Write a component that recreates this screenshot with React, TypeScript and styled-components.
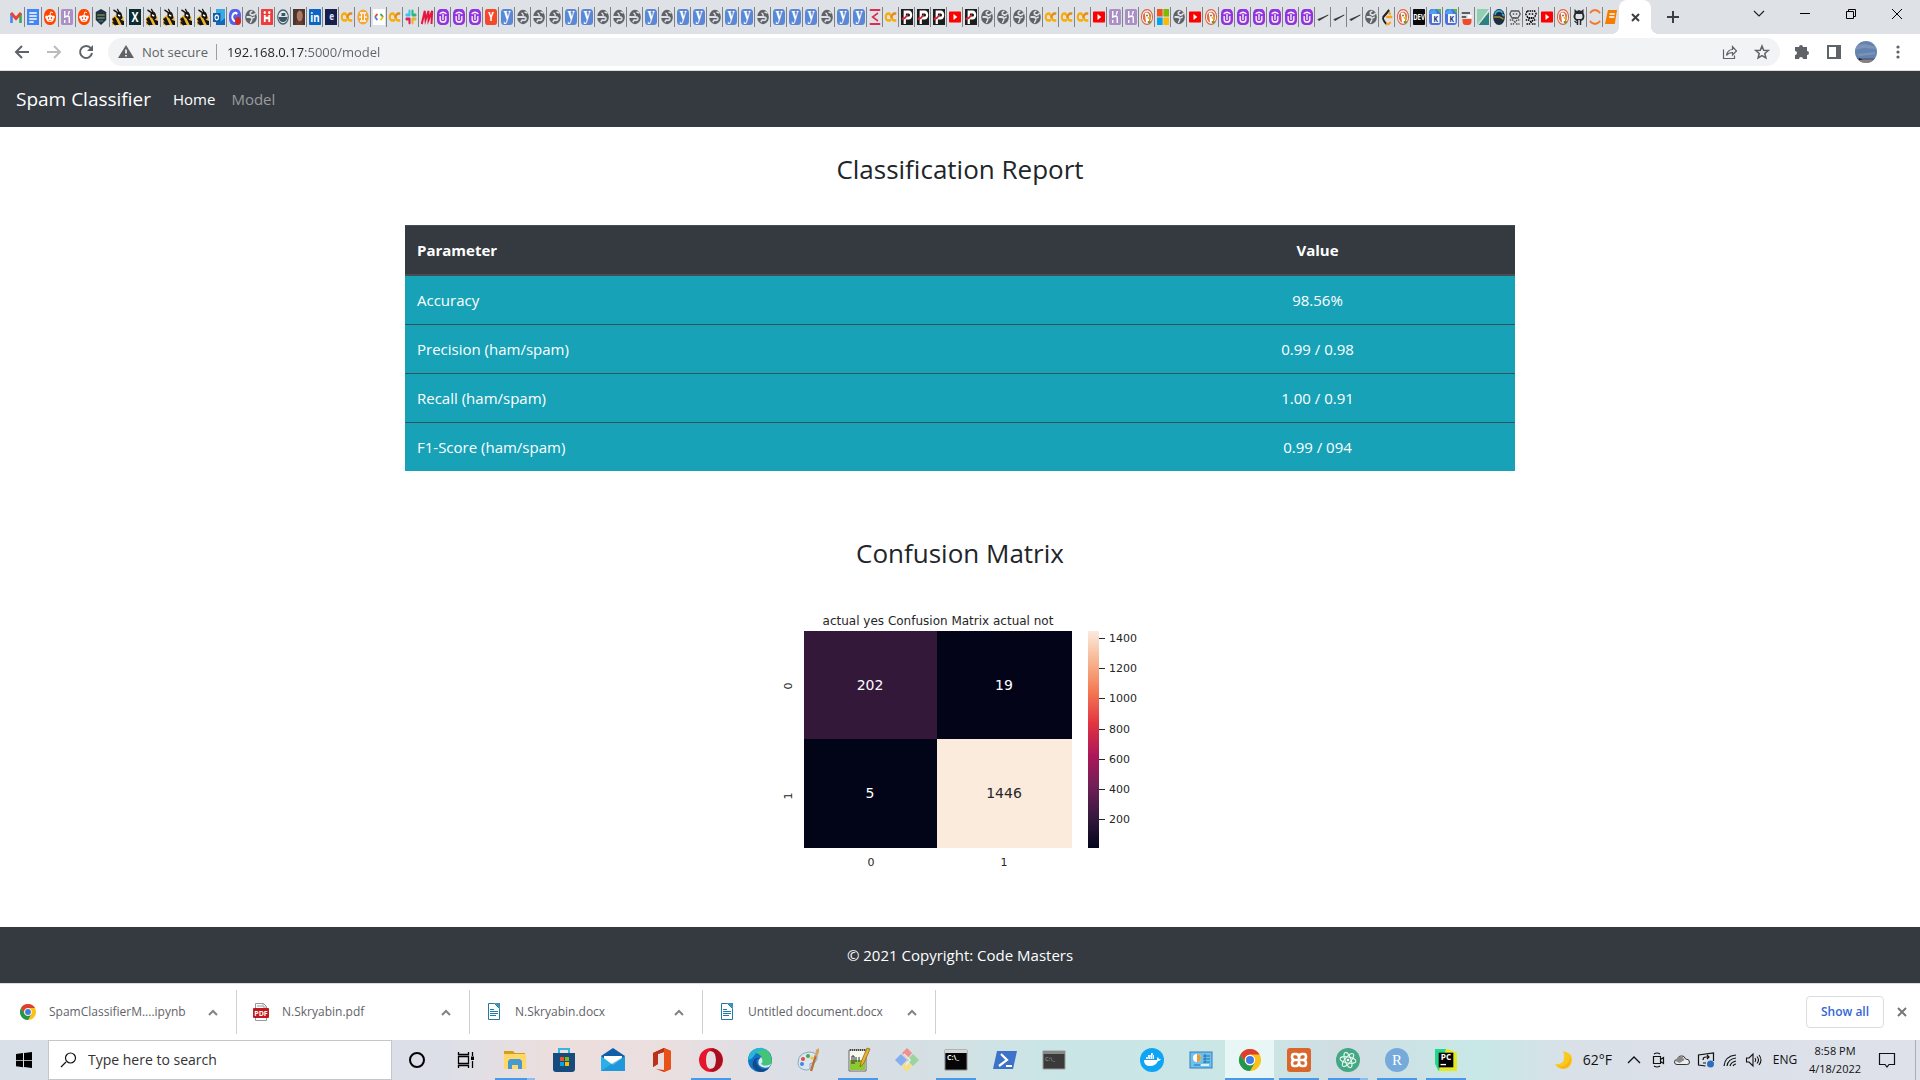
import React from 'react';
import styled, { createGlobalStyle } from 'styled-components';

const uiFont = '"Open Sans", "Noto Sans", sans-serif';

const GlobalStyle = createGlobalStyle`
  *, *::before, *::after { box-sizing: border-box; }
  body { margin: 0; background: #fff; color: #212529; font: 15px/24px ${uiFont}; }
  button, input { font: inherit; color: inherit; border: 0; padding: 0; margin: 0; background: none; }
  svg { display: block; flex: none; overflow: visible; }
`;

const Screen = styled.div`
  display: flex;
  flex-direction: column;
  min-height: 100vh;
`;

/* ---------- Tab strip ---------- */

const TabStrip = styled.div`
  display: flex;
  height: 34px;
  padding-left: 8px;
  background: #dee1e6;
`;

const Tabs = styled.div`
  display: flex;
  align-items: center;
`;

const Tab = styled.button<{ $wide: boolean; $last: boolean }>`
  display: flex;
  align-items: center;
  justify-content: center;
  width: ${(p) => (p.$wide ? 17 : 16)}px;
  height: 20px;
  border-right: 1px solid ${(p) => (p.$last ? 'transparent' : '#808387')};
`;

const ActiveTab = styled.div`
  position: relative;
  display: flex;
  align-items: center;
  justify-content: center;
  width: 32px;
  height: 34px;
  background: #fff;
  border-radius: 8px 8px 0 0;
  &::before, &::after {
    content: '';
    position: absolute;
    bottom: 0;
    width: 8px;
    height: 8px;
  }
  &::before { left: -8px; background: radial-gradient(circle at 0 0, transparent 8px, #fff 8px); }
  &::after { right: -8px; background: radial-gradient(circle at 100% 0, transparent 8px, #fff 8px); }
`;

const IconButton = styled.button<{ $w: number }>`
  display: flex;
  align-items: center;
  justify-content: center;
  width: ${(p) => p.$w}px;
  height: 28px;
`;

const NewTab = styled(IconButton)`
  height: 34px;
  margin-left: 8px;
`;

const WindowControls = styled.div`
  display: flex;
  margin-left: auto;
`;

/* ---------- Toolbar ---------- */

const Toolbar = styled.div`
  display: flex;
  align-items: center;
  height: 37px;
  padding: 0 6px;
  border-bottom: 1px solid #dadce0;
  color: #5f6368;
`;

const Omnibox = styled.div`
  display: flex;
  flex: 1;
  align-items: center;
  height: 28px;
  margin: 0 6px;
  padding: 0 2px 0 10px;
  border-radius: 14px;
  background: #f1f3f4;
  font-size: 13px;
`;

const Security = styled.span`
  display: flex;
  align-items: center;
  gap: 8px;
  padding-right: 8px;
  border-right: 1px solid #9aa0a6;
  line-height: 16px;
`;

const Address = styled.input`
  flex: 1;
  margin-left: 10px;
  outline: none;
  color: #5f6368;
  background: linear-gradient(90deg, #202124 77px, #5f6368 77px);
  -webkit-background-clip: text;
  background-clip: text;
  -webkit-text-fill-color: transparent;
`;

/* ---------- Web page ---------- */

const Site = styled.div`
  display: flex;
  flex: 1;
  flex-direction: column;
`;

const Navbar = styled.nav`
  display: flex;
  align-items: center;
  height: 56px;
  padding: 0 16px;
  background: #343a40;
`;

const Brand = styled.a`
  margin-right: 22px;
  color: #fff;
  font-size: 19px;
  text-decoration: none;
`;

const NavLink = styled.a<{ $muted?: boolean }>`
  margin-right: 16px;
  color: ${(p) => (p.$muted ? '#999c9f' : '#fff')};
  text-decoration: none;
`;

const Main = styled.main`
  display: flex;
  flex: 1;
  flex-direction: column;
  align-items: center;
  padding: 24px 15px;
`;

const Heading = styled.h2`
  margin: 0;
  font-size: 26px;
  font-weight: 400;
  line-height: 36px;
`;

const Report = styled.table`
  width: 100%;
  max-width: 1110px;
  margin: 38px 0 64px;
  border-collapse: collapse;
  background: #17a2b8;
  color: #fff;
`;

const HeadCell = styled.th`
  padding: 12px;
  border-top: 1px solid #454d55;
  border-bottom: 2px solid #454d55;
  background: #343a40;
  text-align: left;
  &:last-child { width: 395px; text-align: center; }
`;

const Cell = styled.td`
  padding: 12px;
  border-top: 1px solid #32545c;
  &:last-child { text-align: center; }
`;

const Chart = styled.svg`
  margin-top: 17px;
  font-family: "DejaVu Sans", sans-serif;
  fill: #262626;
`;

const Footer = styled.footer`
  padding: 16px;
  background: #343a40;
  color: #fff;
  text-align: center;
`;

/* ---------- Downloads shelf ---------- */

const Shelf = styled.div`
  display: flex;
  align-items: center;
  height: 57px;
  padding-left: 4px;
  border-top: 1px solid #dadce0;
  background: #fff;
`;

const Download = styled.button`
  display: flex;
  align-items: center;
  width: 233px;
  height: 44px;
  padding: 0 18px 0 16px;
  border-right: 1px solid #cfd1d4;
  color: #5f6368;
  font-size: 12px;
  & > span { flex: 1; margin-left: 13px; text-align: left; }
`;

const ShowAll = styled.button`
  width: 78px;
  height: 32px;
  margin-left: auto;
  border: 1px solid #dadce0;
  border-radius: 4px;
  color: #3367d6;
  font-size: 12px;
  font-weight: 600;
`;

/* ---------- Taskbar ---------- */

const Taskbar = styled.div`
  display: flex;
  height: 40px;
  background: linear-gradient(90deg, #d9e0e8 0, #dcdfe8 23%, #ecdedd 29%, #ebdfdf 34%, #dcdfe6 41%, #d5dfe3 48%, #c9e5e6 55%, #cae6e5 65%, #d0dde2 70%, #c8e8e8 77%, #dae0e8 82%, #dee1ea 100%);
  color: #111;
`;

const StartButton = styled(IconButton)`
  height: 40px;
`;

const SearchBox = styled.label`
  display: flex;
  align-items: center;
  width: 344px;
  padding: 0 11px;
  border: 1px solid #c3c6ca;
  background: #fff;
`;

const SearchInput = styled.input`
  flex: 1;
  margin-left: 12px;
  outline: none;
  font-size: 14px;
  &::placeholder { color: #333; opacity: 1; }
`;

const AppButton = styled.button<{ $open?: boolean; $stacked?: boolean; $active?: boolean }>`
  display: flex;
  align-items: center;
  justify-content: center;
  width: 49px;
  height: 40px;
  background:
    linear-gradient(90deg, ${(p) => (p.$stacked ? '#4a98e8 32px, #8dbdee 32px' : '#4a98e8, #4a98e8')})
      center bottom / ${(p) => (p.$active ? 49 : p.$open ? 40 : 0)}px 2px no-repeat,
    ${(p) => (p.$active ? '#e9f6f6' : 'transparent')};
`;

const Gap = styled.span`
  width: 49px;
`;

const Tray = styled.div`
  display: flex;
  align-items: center;
  margin-left: auto;
  padding-right: 4px;
`;

const TrayButton = styled(IconButton)`
  height: 40px;
`;

const Weather = styled.button`
  display: flex;
  align-items: center;
  gap: 10px;
  margin-right: 10px;
  font-size: 14px;
`;

const Language = styled.button`
  width: 38px;
  font-size: 12px;
`;

const Clock = styled.time`
  width: 62px;
  font-size: 11px;
  line-height: 18px;
  text-align: center;
`;

const ActionCenter = styled(TrayButton)`
  margin: 0 12px 0 5px;
`;

const DesktopEdge = styled.span`
  height: 40px;
  border-left: 1px solid #a9adb5;
`;

/* ---------- Favicons ---------- */

const glyph = (text: string, fill: string, size = 13, x = 8, y = 13, family = 'Open Sans') => (
  <text x={x} y={y} fill={fill} fontSize={size} fontWeight="700" fontFamily={family} textAnchor="middle">{text}</text>
);

const tile = (fill: string, r = 2) => <rect width="16" height="16" rx={r} fill={fill} />;

const favicons: Record<string, React.ReactNode> = {
  gmail: <g fill="none" strokeWidth="3.4"><path d="M2 14V4" stroke="#4285f4" /><path d="M14 14V4" stroke="#34a853" /><path d="M1.500 4L8 9.500 14.500 4" stroke="#ea4335" /></g>,
  docs: <>{tile('#4285f4', 0)}<path d="M3 4h10M3 7h10M3 10h10M3 13h6" stroke="#fff" strokeWidth="1.400" /></>,
  reddit: <>{tile('#ff4500', 7)}<ellipse cx="8" cy="9.500" rx="5" ry="3.600" fill="#fff" /><circle cx="3" cy="8" r="1.500" fill="#fff" /><circle cx="13" cy="8" r="1.500" fill="#fff" /><path d="M8 6l1-3 3 .7" stroke="#fff" fill="none" /><circle cx="6" cy="9" r="1" fill="#ff4500" /><circle cx="10" cy="9" r="1" fill="#ff4500" /><path d="M6 11.300q2 1 4 0" stroke="#ff4500" fill="none" strokeWidth=".8" /></>,
  heroku: <>{tile('#a98fc4')}<path d="M5 2v6q6-2 6 1v5M11 2q0 2-1.500 3.500M5 11v3" stroke="#fff" strokeWidth="1.800" fill="none" /></>,
  shield: <><path d="M8 0l7 3v8l-7 5-7-5V3z" fill="#1d3445" /><path d="M3 6h10M3 9h10" stroke="#7c8148" strokeWidth="1.500" /><path d="M5 12h6" stroke="#4f90b5" /></>,
  bee: <><path d="M0 9l8-5 7 4 1 8H0z" fill="#efb62f" /><path d="M6 4q5-3 7 1l1 4-3 2-5-3zM0 10l4-2 5 8H5zM9 10l7 2v4h-3z" fill="#151515" /><path d="M2 1l6 3M7 0l3 4M1 13l4 3" stroke="#151515" strokeWidth="1.600" fill="none" /><path d="M8 6l3 1" stroke="#fff" strokeWidth="1.400" /></>,
  x: <>{tile('#0b2c32', 0)}{glyph('X', '#fff', 14)}</>,
  outlook: <><rect x="4" width="12" height="15" fill="#39a8e8" /><path d="M4 9l6 4 6-4v7H4z" fill="#1466b8" /><rect y="4" width="10" height="9" fill="#0f5ba8" /><circle cx="5" cy="8.500" r="2.300" fill="none" stroke="#fff" strokeWidth="1.400" /></>,
  cc: <>{tile('#5562e8', 6)}<path d="M11 5a4 4 0 1 0 0 6" stroke="#fff" strokeWidth="2.400" fill="none" /><circle cx="12" cy="12" r="4" fill="#d32626" /></>,
  globe: <><ellipse cx="8" cy="8" rx="7.800" ry="7.200" fill="#5f6368" /><path d="M10 2q-4 1-3 3l3 1q3 0 4-2M2 8h4q4 0 3 3l-2 3M13 8l-3 1" stroke="#dee1e6" strokeWidth="1.800" fill="none" /></>,
  globeL: <><ellipse cx="8" cy="8" rx="7.800" ry="7.200" fill="#5f6368" /><path d="M0 8h8q1-3-2-4M8 8q5 0 4 2t-5 1l-2 2M10 3l4 1" stroke="#dee1e6" strokeWidth="1.800" fill="none" /></>,
  h: <>{tile('#f03c3c', 1)}<path d="M5 6v7M11 6v7M5 9h6" stroke="#fff" strokeWidth="2.400" /><circle cx="5" cy="3.500" r="1.500" fill="#fff" /><circle cx="11" cy="3.500" r="1.500" fill="#fff" /></>,
  whale: <><circle cx="8" cy="8" r="7" fill="#dfe6ea" stroke="#47606e" strokeWidth="1.500" /><path d="M2 8h12q-1 5-6 5T2 8zM6 4h5v3H6z" fill="#3d5564" /></>,
  photo: <>{tile('#4a3630', 0)}<ellipse cx="9" cy="7" rx="4" ry="5.500" fill="#b07a62" /><path d="M4 11q5 5 9-1v6H4z" fill="#6b3a2c" /></>,
  linkedin: <>{tile('#0a66c2', 1)}{glyph('in', '#fff', 13)}</>,
  e: <>{tile('#17204d', 0)}{glyph('e', '#d9def5', 11, 9, 11)}</>,
  colab: <g fill="none" strokeWidth="2.600"><path d="M8 10.500Q7 11.500 5 11.500q-4 0-4-3.500t4-3.500q2 0 3.500 3.500t4 3.500H15" stroke="#f9ab00" /><path d="M15 4.500h-2.500Q10 4.500 8 9" stroke="#e8871a" /></g>,
  orange: <><circle cx="8" cy="8" r="7.600" fill="#f4a63a" /><path d="M4 4h8M4 12h8M6 5v6M10 5v6M3 8h2M11 8h2" stroke="#fff" strokeWidth="1.300" /></>,
  dev: <>{tile('#fff', 0)}<g fill="none" strokeWidth="2.300"><path d="M6 5L2.500 8" stroke="#ea4335" /><path d="M2.500 8L6 11" stroke="#4285f4" /><path d="M10 5l3.500 3" stroke="#34a853" /><path d="M13.500 8L10 11" stroke="#fbbc04" /></g></>,
  slack: <g fill="none" strokeWidth="2.800" strokeLinecap="round"><path d="M6 2v4M2 6h4" stroke="#36c5f0" /><path d="M10 2v4M14 6h-3" stroke="#2eb67d" /><path d="M10 14v-4M14 10h-4" stroke="#ecb22e" /><path d="M6 14v-4M2 10h3" stroke="#e01e5a" /></g>,
  m: <path d="M1 15L5 2l1 9 4-9v9l5-9-1 13" fill="none" stroke="#e6173f" strokeWidth="2.600" />,
  u: <>{tile('#9333dc', 5)}<path d="M4.200 7v3.500q0 2.500 3.800 2.500t3.800-2.500V7M8 5v6" stroke="#fff" strokeWidth="1.700" fill="none" /><path d="M3.500 5Q8 1.500 12.500 5" stroke="#fff" strokeWidth="1.500" fill="none" /></>,
  yc: <>{tile('#f2492c', 3)}{glyph('Y', '#fff', 12, 8, 12)}</>,
  y: <>{tile('#5a87d6', 4)}{glyph('y', '#fff', 19, 8, 11, 'Liberation Serif')}</>,
  tally: <path d="M1 1h14M1 15h14M12 4L5 8l7 4" stroke="#e02b50" strokeWidth="2" fill="none" />,
  p: <>{tile('#1c1c1c', 0)}<path d="M5 15V3h5.500a3 3 0 0 1 0 6H5" stroke="#fff" strokeWidth="3" fill="none" /><path d="M1 10l4-1 4-3" stroke="#e02030" strokeWidth="2" fill="none" /></>,
  yt: <><rect y="2.500" width="16" height="11" rx="1" fill="#f00" /><path d="M6 5l5 3-5 3z" fill="#fff" /></>,
  duck: <><ellipse cx="8" cy="8" rx="7.400" ry="7.400" fill="#fff" stroke="#d9603c" strokeWidth="1.300" /><circle cx="8" cy="8" r="5.600" fill="#dd7048" /><path d="M5 4q5-2 6 3v3l-1 4H7z" fill="#fff" /><circle cx="8" cy="6.500" r=".9" fill="#333" /><path d="M9 8h4v2H9z" fill="#f5b21b" /><path d="M9 12h4v2H9z" fill="#57a83a" /></>,
  ms: <><path d="M0 0h7.500v7.500H0z" fill="#f25022" /><path d="M8.500 0H16v7.500H8.500z" fill="#7fba00" /><path d="M0 8.500h7.500V16H0z" fill="#00a4ef" /><path d="M8.500 8.500H16V16H8.500z" fill="#ffb900" /></>,
  dash: <path d="M1 10.500L15 6l-12 5.500z" stroke="#333" strokeWidth=".8" fill="#333" />,
  leet: <g fill="none" strokeWidth="2.400"><path d="M11 1L3 8q-1 2 1 4l3 3" stroke="#222" /><path d="M7 15q3 1 6-2M7 8h8M13 5l-3-1" stroke="#ffa116" /></g>,
  devto: <>{tile('#0a0a0a', 1)}{glyph('DEV', '#fff', 8, 8, 11)}</>,
  k: <>{tile('#4c6fdd', 4)}<path d="M0 5q2-5 8-5l3 5z" fill="#4aa3f0" /><path d="M10 0h6v5z" fill="#54b848" /><rect x="4" y="5" width="10" height="9" fill="#f3f6ff" />{glyph('K', '#23306e', 9, 9, 13)}</>,
  news: <><path d="M1 4h11M1 8h6" stroke="#333" strokeWidth="1.600" /><path d="M2 10h12v2q0 4-4 4H6q-4 0-4-4z" fill="#f04c2c" /><rect x="9" y="6" width="5" height="3" fill="#fff" /></>,
  tri: <><path d="M0 0h16L0 16z" fill="#90cfb0" /><path d="M16 3v13H2z" fill="#2b8280" /></>,
  py: <><ellipse cx="8" cy="8" rx="7.800" ry="8" fill="#1b2f3c" /><path d="M3 6q0-4 5-4 4 0 4 2" stroke="#3ba7dc" strokeWidth="2" fill="none" /><path d="M1 8h8l5 2" stroke="#a78f34" strokeWidth="1.500" fill="none" /><path d="M12 5l3 2" stroke="#3ba7dc" strokeWidth="2" /></>,
  bones: <g fill="none" stroke="#555" strokeWidth="1.500"><path d="M3 2h10l2 3-3 4H4L1 5z" /><path d="M5 5h2M9 5h2M5 9h6M1 11h4l3 2 3-2h4M2 15h4l2-2 2 2h4" strokeDasharray="2 1" /></g>,
  bonesDark: <g fill="none" stroke="#000" strokeWidth="1.700"><path d="M3 2h10l2 3-3 4H4L1 5z" strokeDasharray="2 1" /><path d="M5 5h2M9 5h2M5 9h6M1 11h4l3 2 3-2h4M2 15h4l2-2 2 2h4" strokeDasharray="2 1" /></g>,
  github: <><path d="M8 1L5 2 2 0v4Q0 7 1 9q2 3 4 3v4h6v-4q5-1 4-6l-1-2V0l-3 2z" fill="#24292e" /><path d="M4 5h8q2 4-1 5H5Q2 9 4 5zM7 11h2v5H7z" fill="#dee1e6" /><path d="M2 12l3 2" stroke="#24292e" strokeWidth="1.500" /></>,
  jupyter: <path d="M1 4Q8-2 15 4M1 12q7 6 14 0" stroke="#f37726" strokeWidth="2" fill="none" />,
  book: <><path d="M4 1h12l-3 14H0z" fill="#f57c00" /><path d="M6 5h7M5.500 8h7" stroke="#fff" strokeWidth="1.400" /></>,
};

const tabIcons = (
  'gmail docs reddit heroku reddit shield bee x bee bee bee bee outlook cc globe h whale photo linkedin e colab orange dev colab slack m u u u ' +
  'yc y globeL globeL globeL y y globeL globeL globeL y globeL y y globeL y y globeL y y y globeL y y tally colab p p p yt ' +
  'p globe globe globe globe colab colab colab yt heroku heroku duck ms globe yt duck u u u u u u dash dash dash globe leet duck devto k ' +
  'k news tri py bones bonesDark yt duck github jupyter book'
).split(' ');

const Favicon = ({ name }: { name: string }) => (
  <svg width="12" height="16" viewBox="0 0 16 16" preserveAspectRatio="none" aria-hidden="true">{favicons[name]}</svg>
);

/* ---------- Shared icons ---------- */

const Line = ({ d, w = 16, h = 16, s = 1, c = 'currentColor' }: { d: string; w?: number; h?: number; s?: number; c?: string }) => (
  <svg width={w} height={h} viewBox={`0 0 ${w} ${h}`} fill="none" stroke={c} strokeWidth={s} aria-hidden="true"><path d={d} /></svg>
);

const Chrome = ({ size }: { size: number }) => (
  <svg width={size} height={size} viewBox="0 0 24 24" aria-hidden="true">
    <circle cx="12" cy="12" r="12" fill="#fbc116" />
    <path d="M1.600 6A12 12 0 0 1 22.400 6H12a6 6 0 0 0-5.200 9z" fill="#dc3f31" />
    <path d="M1.600 6A12 12 0 0 0 12 24l5.200-9A6 6 0 0 1 6.800 15z" fill="#219653" />
    <circle cx="12" cy="12" r="5.600" fill="#fff" />
    <circle cx="12" cy="12" r="4.400" fill="#3e7bea" />
  </svg>
);

const Pdf = () => (
  <svg width="16" height="18" viewBox="0 0 16 18" aria-hidden="true">
    <path d="M2.500.5h8l3 3v14h-11z" fill="#fff" stroke="#999" />
    <path d="M4 3h5M10 .5V4h3" stroke="#999" fill="none" />
    <rect y="5" width="16" height="10" rx="1" fill="#c11920" />
    <text x="8" y="13" fontSize="7" fontWeight="700" textAnchor="middle" fill="#fff">PDF</text>
  </svg>
);

const Docx = () => (
  <svg width="16" height="18" viewBox="0 0 16 18" aria-hidden="true">
    <path d="M2.500.5h6l5 5v11h-11z" fill="#fff" stroke="#1f7aa5" />
    <path d="M8.500 0H14v5.500z" fill="#3791c0" />
    <path d="M4 6.500h4M4 8.500h8M4 10.500h8M4 12.500h6" stroke="#1f7aa5" />
  </svg>
);

const Icon = ({ size = 24, children }: { size?: number; children: React.ReactNode }) => (
  <svg width={size} height={size} viewBox="0 0 24 24" aria-hidden="true">{children}</svg>
);

type AppEntry = { name: string; open?: boolean; stacked?: boolean; active?: boolean; icon: React.ReactNode };

const pinned: AppEntry[] = [
  { name: 'Cortana', icon: <Icon><circle cx="12" cy="12" r="7" fill="none" stroke="#000" strokeWidth="2" /></Icon> },
  { name: 'Task View', icon: <Icon><path d="M4.500 8.500h10v7h-10zM4.500 4v2.500h10V4M4.500 20v-2.500h10V20M18.500 4v4M18.500 13v7" fill="none" stroke="#000" strokeWidth="1.300" /><rect x="17" y="8.500" width="3" height="3.500" /></Icon> },
  { name: 'File Explorer', open: true, stacked: true, icon: <Icon><path d="M1 3h9l2 2h10v5H1z" fill="#d69d1d" /><path d="M1 6h22v15H1z" fill="#ffd866" /><path d="M5 21v-8l2-2h10l2 2v8h-4v-4H9v4z" fill="#4699d3" /></Icon> },
  { name: 'Microsoft Store', icon: <Icon><path d="M7 6V1h10v5" fill="none" stroke="#37b5e5" strokeWidth="2" /><path d="M1 5h22v16q0 3-3 3H4q-3 0-3-3z" fill="#174b7d" /><path d="M8 9h4v4H8z" fill="#f25022" /><path d="M13 9h4v4h-4z" fill="#7fba00" /><path d="M8 14h4v4H8z" fill="#00a4ef" /><path d="M13 14h4v4h-4z" fill="#ffb900" /></Icon> },
  { name: 'Mail', icon: <Icon><path d="M0 8l12-8 12 8-3 8H3z" fill="#0f5fa8" /><path d="M3 8h18v8H3z" fill="#fff" /><path d="M0 8l12 9 12-9v15H0z" fill="#2caee8" /><path d="M0 23l12-8 12-7v15z" fill="#1887d2" opacity=".6" /></Icon> },
  { name: 'Office', icon: <Icon><path d="M14 0l7 3v18l-7 3-8-3 8 1V4L8 6v10l-5 3V5z" fill="#d83b12" /><path d="M14 0L3 5v14l5-3V6l6-2z" fill="#b9321b" /><path d="M14 0l7 3v18l-7 3z" fill="#e85219" /></Icon> },
  { name: 'Opera', open: true, icon: <Icon><path d="M12 0a12 12 0 1 0 0 24 12 12 0 0 0 0-24zm0 3q5 0 5 9t-5 9-5-9 5-9z" fill="#e5162b" fillRule="evenodd" /><path d="M14 .3a12 12 0 0 1 0 23.400Q11 23 11 21q6 0 6-9t-6-9q1-2 3-2.700z" fill="#a70f1e" /></Icon> },
  { name: 'Edge', icon: <Icon><circle cx="12" cy="12" r="12" fill="#1373c6" /><path d="M1 8Q6 2 12 7q4 4 1 8 0 4 10 2 2-6-1-11Q17-2 9 .400 2 2 1 8z" fill="#46c475" /><path d="M1 8Q4 0 12 0q5 0 8 3-10-3-14 5-2 3-6 4z" fill="#27b6d6" /><path d="M9 11q-2 4 2 8t10 1q-5 6-12 3-7-5-3-11 2-3 6-2z" fill="#114a8b" /><path d="M13 9q3 4 0 7 4 3 10 0l-2 3q-6 2-10-2-2-4 2-8z" fill="#dcecf2" /></Icon> },
  { name: 'Paint', icon: <Icon><path d="M1 15q0-10 11-11 9 0 8 7-1 4-5 4-3 0-2 3 1 4-4 4-8-1-8-7z" fill="#d9e6ef" stroke="#8aa8be" /><circle cx="6" cy="11" r="2" fill="#e44" /><circle cx="11" cy="8" r="2" fill="#4a4" /><circle cx="5" cy="16" r="2" fill="#48d" /><circle cx="15" cy="10" r="1.600" fill="#fb3" /><path d="M14 23l5-16" stroke="#b9732e" strokeWidth="2.400" /><path d="M18 8l1-6 3-2v4l-2 5z" fill="#d5a25c" /></Icon> },
  { name: 'Notepad++', open: true, icon: <Icon><path d="M3 2h17v21H3z" fill="#f7f9ee" stroke="#666" /><path d="M4 12h15v10H4z" fill="#8cc932" /><path d="M4 2h15" stroke="#444" strokeWidth="2" strokeDasharray="1 1" /><path d="M6 16V8h2v8M10 9v5M13 9v5" stroke="#333" fill="none" /><path d="M14 19l1-5 6-14 3 1-6 14z" fill="#e8b32b" stroke="#835d19" strokeWidth=".7" /></Icon> },
  { name: 'Git', icon: <Icon><path d="M12 0l5 5-5 6-5-6z" fill="#f0908c" /><path d="M6 6l6 6-6 6-6-6z" fill="#84adf2" /><path d="M18 6l6 6-6 6-6-6z" fill="#9bd49c" /><path d="M12 13l5 5-5 6-5-6z" fill="#f6df83" /><path d="M9 6l6 6-4 5" stroke="#eee" strokeWidth="1.500" fill="none" /></Icon> },
  { name: 'Command Prompt', open: true, icon: <Icon><path d="M1 2h22v20H1z" fill="#050505" stroke="#888" /><path d="M1 2h22v3H1z" fill="#d5d5d5" /><text x="3" y="12" fontSize="7" fontWeight="700" fill="#fff">C:\_</text></Icon> },
  { name: 'PowerShell', icon: <Icon><path d="M4 3h20l-4 18H0z" fill="#3c72c8" /><path d="M8 6l6 6-8 6M13 18h6" stroke="#fff" strokeWidth="2.200" fill="none" /></Icon> },
  { name: 'Terminal', icon: <Icon><path d="M1 3h22v18H1z" fill="#3a3a3a" stroke="#999" /><path d="M1 3h22v3H1z" fill="#888" /><text x="3" y="13" fontSize="6" fill="#aaa">C:\_</text></Icon> },
];

const running: AppEntry[] = [
  { name: 'Docker', icon: <Icon><circle cx="12" cy="12" r="12" fill="#0fa5f5" /><path d="M4 12h13q0-3 1-3l1 2h2q-1 2-3 2-2 5-8 5-6 0-6-6z" fill="#fff" /><path d="M6 10h8M8 8h6M11 6h2" stroke="#fff" strokeWidth="1.800" strokeDasharray="1.800 .5" /></Icon> },
  { name: 'Control Panel', icon: <Icon><rect x="1" y="4" width="22" height="16" fill="#6fc1ed" stroke="#377fb8" /><circle cx="8" cy="10" r="4" fill="#fff" /><path d="M8 10V6a4 4 0 0 1 0 8z" fill="#e99b3b" /><path d="M14 8h7M14 11h7M14 14h7M16 6v9M5 17h6" stroke="#2370ae" /><path d="M12 17h8" stroke="#fff" strokeWidth="1.500" /></Icon> },
  { name: 'Chrome', open: true, active: true, icon: <Chrome size={22} /> },
  { name: 'XAMPP', open: true, icon: <Icon><rect width="24" height="24" rx="3" fill="#d9662a" /><path d="M7 6q-2 0-2 3t3 3q-3 0-3 3t2 3h2q3 0 3-4v-4q0-4 3-4h2q2 0 2 3t-3 3q3 0 3 3t-2 3h-2q-3 0-3-4v-4q0-4-3-4zM8 12h8" stroke="#fff" strokeWidth="2.600" fill="none" /></Icon> },
  { name: 'Atom', open: true, stacked: true, icon: <Icon><circle cx="12" cy="12" r="12" fill="#43a883" /><g fill="none" stroke="#e4f6ed"><ellipse cx="12" cy="12" rx="3" ry="8" transform="rotate(-20 12 12)" /><ellipse cx="12" cy="12" rx="3" ry="8" transform="rotate(40 12 12)" /><ellipse cx="12" cy="12" rx="3" ry="8" transform="rotate(100 12 12)" /></g><circle cx="12" cy="12" r="1.300" fill="#fff" /></Icon> },
  { name: 'RStudio', open: true, icon: <Icon><circle cx="12" cy="12" r="12" fill="#75aadb" /><text x="12" y="17" fontSize="15" fontFamily="Liberation Serif" textAnchor="middle" fill="#fff">R</text></Icon> },
  { name: 'PyCharm', open: true, icon: <Icon size={22}><path d="M0 0h14l10 4v20H4L0 16z" fill="#e4e91f" /><path d="M0 0h12L4 24 0 16z" fill="#21d789" /><path d="M4 4h16v16H4z" fill="#000" /><text x="12" y="12" fontSize="9" fontWeight="700" textAnchor="middle" fill="#fff">PC</text><path d="M6 17h6" stroke="#fff" strokeWidth="1.500" /></Icon> },
];

const AppIcon = ({ app }: { app: AppEntry }) => (
  <AppButton aria-label={app.name} $open={app.open} $stacked={app.stacked} $active={app.active}>{app.icon}</AppButton>
);

const rows = [
  ['Accuracy', '98.56%'],
  ['Precision (ham/spam)', '0.99 / 0.98'],
  ['Recall (ham/spam)', '1.00 / 0.91'],
  ['F1-Score (ham/spam)', '0.99 / 094'],
];

const downloads: [string, React.ReactNode][] = [
  ['SpamClassifierM....ipynb', <Chrome size={16} />],
  ['N.Skryabin.pdf', <Pdf />],
  ['N.Skryabin.docx', <Docx />],
  ['Untitled document.docx', <Docx />],
];

const scale = ['#03051a', '#35193e', '#701f57', '#ad1759', '#e13342', '#f37651', '#f6b48f', '#faebdd'];
const ticks: [number, number][] = [[1400, 50], [1200, 80], [1000, 110], [800, 141], [600, 171], [400, 201], [200, 231]];

const ConfusionMatrix = () => (
  <Chart width="432" height="288" viewBox="0 0 432 288" role="img" aria-label="Confusion matrix heat map">
    <defs>
      <linearGradient id="rocket" x1="0" y1="1" x2="0" y2="0">
        {scale.map((c, i) => <stop key={c} offset={i / 7} stopColor={c} />)}
      </linearGradient>
    </defs>
    <text x="194" y="37" fontSize="12" textAnchor="middle">actual yes Confusion Matrix actual not</text>
    <rect x="60" y="43" width="133" height="108" fill="#33183a" />
    <rect x="193" y="43" width="135" height="108" fill="#040418" />
    <rect x="60" y="151" width="133" height="109" fill="#020418" />
    <rect x="193" y="151" width="135" height="109" fill="#faebdd" />
    <g fontSize="14" textAnchor="middle" fill="#fff">
      <text x="126" y="102">202</text>
      <text x="260" y="102">19</text>
      <text x="126" y="210">5</text>
      <text x="260" y="210" fill="#262626">1446</text>
    </g>
    <g fontSize="11" textAnchor="middle">
      <text x="127" y="278">0</text>
      <text x="260" y="278">1</text>
      <text transform="translate(48 98) rotate(-90)">0</text>
      <text transform="translate(48 208) rotate(-90)">1</text>
    </g>
    <rect x="344" y="43" width="11" height="217" fill="url(#rocket)" />
    {ticks.map(([label, y]) => (
      <g key={label} fontSize="11">
        <rect x="355" y={y} width="6" height="1" />
        <text x="365" y={y + 4}>{label}</text>
      </g>
    ))}
  </Chart>
);

export default function App() {
  return (
    <Screen>
      <GlobalStyle />
      <TabStrip>
        <Tabs>
          {tabIcons.map((name, i) => (
            <Tab key={i} aria-label={`Tab ${i + 1}`} $wide={i < 11} $last={i === tabIcons.length - 1}><Favicon name={name} /></Tab>
          ))}
        </Tabs>
        <ActiveTab>
          <IconButton $w={16} aria-label="Close tab"><Line d="M1 1l7 7M8 1L1 8" w={9} h={9} s={2} c="#3c4043" /></IconButton>
        </ActiveTab>
        <NewTab $w={28} aria-label="New tab"><Line d="M6 0v12M0 6h12" w={12} h={12} s={2} c="#3c4043" /></NewTab>
        <WindowControls>
          <IconButton $w={46} aria-label="Search tabs"><Line d="M1 3l5 5 5-5" w={12} h={12} s={1.2} c="#222" /></IconButton>
          <IconButton $w={46} aria-label="Minimize"><Line d="M1 5.500h10" w={12} h={12} c="#000" /></IconButton>
          <IconButton $w={46} aria-label="Restore"><Line d="M1.500 3.500h7v7h-7zM3.500 3V1.500h7v7H9" w={12} h={12} c="#000" /></IconButton>
          <IconButton $w={46} aria-label="Close window"><Line d="M1 1l10 10M11 1L1 11" w={12} h={12} c="#000" /></IconButton>
        </WindowControls>
      </TabStrip>

      <Toolbar>
        <IconButton $w={32} aria-label="Back"><Line d="M15 8H2M8 2L2 8l6 6" s={2} /></IconButton>
        <IconButton $w={32} aria-label="Forward"><Line d="M1 8h13M8 2l6 6-6 6" s={2} c="#babcbe" /></IconButton>
        <IconButton $w={32} aria-label="Reload">
          <svg width="16" height="16" viewBox="0 0 16 16" aria-hidden="true"><path d="M13 4.500A6 6 0 1 0 14 9" fill="none" stroke="#5f6368" strokeWidth="2" /><path d="M15 1v6H9z" fill="#5f6368" /></svg>
        </IconButton>
        <Omnibox>
          <Security>
            <svg width="16" height="16" viewBox="0 0 16 16" aria-hidden="true"><path d="M8 1l8 13H0z" fill="#5f6368" /><path d="M8 5.500v4M8 11v1.500" stroke="#fff" strokeWidth="1.600" /></svg>
            Not secure
          </Security>
          <Address aria-label="Address" defaultValue="192.168.0.17:5000/model" />
          <IconButton $w={32} aria-label="Share"><Line d="M1.500 5.500v9h11v-3M4.500 11.500q1-6 6-6V2.500l4 4.500-4 4V8.500q-4 0-6 3z" s={1.2} /></IconButton>
          <IconButton $w={32} aria-label="Bookmark"><Line d="M8 2l1.700 4.200 4.600.3-3.500 3 1.100 4.500L8 11.600 4.100 14l1.100-4.500-3.500-3 4.600-.3z" s={1.5} /></IconButton>
        </Omnibox>
        <IconButton $w={32} aria-label="Extensions">
          <svg width="16" height="16" viewBox="0 0 16 16" aria-hidden="true"><path d="M5 3a2 2 0 0 1 4 0h4v4a2 2 0 0 1 0 4v4H9a2 2 0 0 0-4 0H1v-4a2 2 0 0 0 0-4V3z" fill="#5f6368" /></svg>
        </IconButton>
        <IconButton $w={32} aria-label="Side panel">
          <svg width="14" height="14" viewBox="0 0 14 14" aria-hidden="true"><path d="M0 0h14v14H0zm2 2v10h7V2z" fill="#5f6368" fillRule="evenodd" /></svg>
        </IconButton>
        <IconButton $w={32} aria-label="Profile">
          <svg width="22" height="22" viewBox="0 0 22 22" aria-hidden="true">
            <defs><clipPath id="avatar"><circle cx="11" cy="11" r="11" /></clipPath></defs>
            <g clipPath="url(#avatar)"><rect width="22" height="22" fill="#6583b0" /><path d="M0 5l9-2 13 3v2L9 7 0 9zM2 13l18-2v2L5 15z" fill="#7c94b8" /><path d="M0 17h22v2H0z" fill="#56688a" /><path d="M4 17l4 2H4z" fill="#222" /><path d="M0 19h22v3H0z" fill="#8a8079" /></g>
          </svg>
        </IconButton>
        <IconButton $w={32} aria-label="Menu">
          <svg width="16" height="16" viewBox="0 0 16 16" fill="#5f6368" aria-hidden="true"><circle cx="8" cy="3" r="1.600" /><circle cx="8" cy="8" r="1.600" /><circle cx="8" cy="13" r="1.600" /></svg>
        </IconButton>
      </Toolbar>

      <Site>
        <Navbar>
          <Brand href="#">Spam Classifier</Brand>
          <NavLink href="#">Home</NavLink>
          <NavLink href="#model" $muted>Model</NavLink>
        </Navbar>
        <Main>
          <Heading>Classification Report</Heading>
          <Report>
            <thead>
              <tr><HeadCell scope="col">Parameter</HeadCell><HeadCell scope="col">Value</HeadCell></tr>
            </thead>
            <tbody>
              {rows.map(([name, value]) => <tr key={name}><Cell>{name}</Cell><Cell>{value}</Cell></tr>)}
            </tbody>
          </Report>
          <Heading>Confusion Matrix</Heading>
          <ConfusionMatrix />
        </Main>
        <Footer>© 2021 Copyright: Code Masters</Footer>
      </Site>

      <Shelf>
        {downloads.map(([name, icon]) => (
          <Download key={name}>{icon}<span>{name}</span><Line d="M1 8l4-4 4 4" w={10} h={10} s={2} c="#808387" /></Download>
        ))}
        <ShowAll>Show all</ShowAll>
        <IconButton $w={36} aria-label="Close downloads"><Line d="M1 1l8 8M9 1L1 9" w={10} h={10} s={2} c="#757779" /></IconButton>
      </Shelf>

      <Taskbar>
        <StartButton $w={48} aria-label="Start">
          <svg width="16" height="16" viewBox="0 0 16 16" aria-hidden="true"><path d="M0 2l7-1v7H0zM8 1l8-1v8H8zM0 8.700h7v6.500l-7-1zM8 8.700h8V16l-8-1z" /></svg>
        </StartButton>
        <SearchBox>
          <Line d="M6 10L1 15M5.500 6a5 5 0 1 0 10 0 5 5 0 1 0-10 0z" s={1.2} c="#111" />
          <SearchInput aria-label="Search" placeholder="Type here to search" />
        </SearchBox>
        {pinned.map((app) => <AppIcon key={app.name} app={app} />)}
        <Gap />
        {running.map((app) => <AppIcon key={app.name} app={app} />)}
        <Tray>
          <Weather>
            <svg width="18" height="20" viewBox="0 0 18 20" aria-hidden="true"><path d="M8 1q10 2 9 10-2 9-10 8-5-1-7-5 8 1 9-5 1-4-1-8z" fill="#fbc81c" /><path d="M14 5q5 9-4 13-4 1-8-2 6 2 10-2t2-9z" fill="#f3a51b" opacity=".6" /></svg>
            62°F
          </Weather>
          <TrayButton $w={24} aria-label="Hidden icons"><Line d="M2 11l6-6 6 6" s={1.3} /></TrayButton>
          <TrayButton $w={24} aria-label="Meet now"><Line d="M3.500 4.500h7v7h-7zM10.500 7.500l3-2v6l-3-2M4 2q3-2 6 0M4 14q3 2 6 0" s={1.2} /></TrayButton>
          <TrayButton $w={24} aria-label="OneDrive">
            <svg width="16" height="12" viewBox="0 0 16 12" aria-hidden="true"><path d="M3 10.500a2.500 2.500 0 0 1 0-5q2-5 7-3l1.500 2.500q4 0 4 3t-3 2.500z" fill="#eee" stroke="#333" /><path d="M1.500 7q2-5 7-4l2 3-5 3z" fill="#8a8a8a" /></svg>
          </TrayButton>
          <TrayButton $w={24} aria-label="Sync">
            <svg width="18" height="16" viewBox="0 0 18 16" aria-hidden="true"><path d="M16.500 9V1l-15 2v10l7 1M6 8q0-3 3-3h3M10 3l2 2-2 2M6 11h3" fill="none" stroke="#111" strokeWidth="1.200" /><circle cx="13.500" cy="12" r="3.500" fill="#2a6fc0" /></svg>
          </TrayButton>
          <TrayButton $w={24} aria-label="Network"><Line d="M2 14Q3 4 14 3M5 14q1-7 9-8M8 14q1-4 6-5M11 14q1-2 3-2" s={1.2} /></TrayButton>
          <TrayButton $w={24} aria-label="Volume"><Line d="M.5 6H3l4-4v12L3 10H.5zM9 6q1.500 2 0 4M11 4.500q3 3.500 0 7M13 3q4 5 0 10" s={1.1} /></TrayButton>
          <Language>ENG</Language>
          <Clock>8:58 PM<br />4/18/2022</Clock>
          <ActionCenter $w={32} aria-label="Notifications"><Line d="M.5 1.500h15v11H10L8 15l-2-2.500H.5z" s={1.2} /></ActionCenter>
          <DesktopEdge />
        </Tray>
      </Taskbar>
    </Screen>
  );
}
